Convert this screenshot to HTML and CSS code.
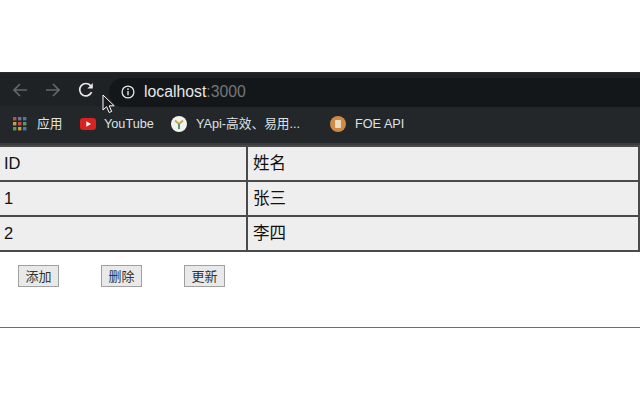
FILE: index.html
```html
<!DOCTYPE html>
<html lang="zh">
<head>
<meta charset="utf-8">
<title>localhost:3000</title>
<link rel="stylesheet" href="styles.css">
</head>
<body>
<div class="page">
  <header class="chrome">
    <div class="toolbar">
      <div class="navs">
        <svg class="nav" width="18" height="18" viewBox="0 0 18 18"><path d="M16 9H3M9 3L3 9l6 6" fill="none" stroke="#63676a" stroke-width="1.7"/></svg>
        <svg class="nav" width="18" height="18" viewBox="0 0 18 18"><path d="M2 9h13M9 3l6 6-6 6" fill="none" stroke="#63676a" stroke-width="1.7"/></svg>
        <svg class="nav" width="18" height="18" viewBox="0 0 18 18"><path d="M14.6 11.2A6.2 6.2 0 1 1 13.6 4.6L15 6" fill="none" stroke="#e4e6e7" stroke-width="1.7"/><path d="M15.8 2v5.4h-5.4z" fill="#e4e6e7"/></svg>
      </div>
      <div class="omnibox">
        <svg class="info" width="14" height="14" viewBox="0 0 14 14"><circle cx="7" cy="7" r="5.9" fill="none" stroke="#e4e6e7" stroke-width="1.3"/><path d="M7 6v4.2" stroke="#e4e6e7" stroke-width="1.4"/><circle cx="7" cy="4.1" r=".9" fill="#e4e6e7"/></svg>
        <span class="host">localhost</span><span class="port">:3000</span>
      </div>
    </div>
    <nav class="bookmarks">
      <span class="bm bm-apps">
        <svg width="14" height="14" viewBox="0 0 14 14">
          <g>
            <rect x="0" y="0" width="3.4" height="3.4" fill="#b5534a"/><rect x="5" y="0" width="3.4" height="3.4" fill="#7e6a9e"/><rect x="10" y="0" width="3.4" height="3.4" fill="#4a78b8"/>
            <rect x="0" y="5" width="3.4" height="3.4" fill="#c9a13c"/><rect x="5" y="5" width="3.4" height="3.4" fill="#b5534a"/><rect x="10" y="5" width="3.4" height="3.4" fill="#5a9a5e"/>
            <rect x="0" y="10" width="3.4" height="3.4" fill="#5a9a5e"/><rect x="5" y="10" width="3.4" height="3.4" fill="#c9a13c"/><rect x="10" y="10" width="3.4" height="3.4" fill="#4a78b8"/>
          </g>
        </svg>
        应用
      </span>
      <span class="bm bm-yt">
        <svg width="16" height="12" viewBox="0 0 16 12"><rect width="16" height="12" rx="3" fill="#d92323"/><path d="M6.3 3.3v5.4L11 6z" fill="#fff"/></svg>
        YouTube
      </span>
      <span class="bm bm-yapi">
        <svg width="16" height="16" viewBox="0 0 16 16"><circle cx="8" cy="8" r="8" fill="#f2f2ee"/><path d="M4 4.6L8 8l4-3.4" fill="none" stroke="#c9a93a" stroke-width="2"/><path d="M8 8v5" stroke="#4d9a7d" stroke-width="2"/></svg>
        YApi-高效、易用...
      </span>
      <span class="bm bm-foe">
        <svg width="16" height="16" viewBox="0 0 16 16"><circle cx="8" cy="8" r="8" fill="#cf8a45"/><rect x="5" y="4" width="6" height="8" rx="1" fill="#e9dcc6"/></svg>
        FOE API
      </span>
    </nav>
  </header>
  <div class="table-wrap">
    <table class="data">
      <tr><td class="col-id">ID</td><td>姓名</td></tr>
      <tr><td class="col-id">1</td><td>张三</td></tr>
      <tr><td class="col-id">2</td><td>李四</td></tr>
    </table>
  </div>
  <div class="actions">
    <button class="btn">添加</button>
    <button class="btn">删除</button>
    <button class="btn">更新</button>
  </div>
  <hr class="rule">
  <svg class="cursor" width="14" height="20" viewBox="0 0 14 20"><path d="M1 1v15l3.6-3.3 2.5 5.8 2.6-1.1-2.5-5.6h5z" fill="#1a1a1a" stroke="#fff" stroke-width="1"/></svg>
</div>
</body>
</html>
```
FILE: styles.css
```css
html, body {
  margin: 0;
  padding: 0;
  background: #fff;
}
body {
  font-family: "Liberation Sans", "Noto Sans CJK SC", sans-serif;
  overflow: hidden;
}
.page {
  position: relative;
  width: 640px;
  height: 400px;
  overflow: hidden;
  padding-top: 72px;
  box-sizing: border-box;
}
.chrome {
  height: 73px;
  background: #23272a;
  box-shadow: inset 0 -2px 0 #3a3c3e;
}
.toolbar {
  display: flex;
  height: 34px;
  background: #1f2224;
  border-top: 1px solid #2b2b2b;
  box-sizing: border-box;
}
.navs {
  display: flex;
  align-items: center;
  gap: 15px;
  padding: 1px 0 0 11px;
  width: 109px;
  box-sizing: border-box;
}
.omnibox {
  flex: 1;
  display: flex;
  align-items: center;
  margin-top: 5px;
  padding: 0 0 2px 12px;
  background: #141719;
  border-radius: 14px 0 0 14px;
  font-size: 15.8px;
  height: 29px;
  margin-bottom: -1px;
  box-sizing: border-box;
}
.info {
  margin-right: 9px;
}
.host {
  color: #e6e8e9;
}
.port {
  color: #73777a;
}
.bookmarks {
  display: flex;
  align-items: center;
  height: 38px;
  padding: 0 0 2px 13px;
  font-size: 12.7px;
  line-height: 16px;
  color: #dfe1e2;
  box-sizing: border-box;
}
.bm {
  display: flex;
  align-items: center;
  gap: 10px;
}
.bm-apps { width: 67px; }
.bm-yt { width: 91px; gap: 8px; }
.bm-yapi { width: 159px; gap: 9px; }
.bm-foe { gap: 9px; }
.table-wrap {
  overflow: hidden;
}
.data {
  width: 642px;
  margin-left: -2px;
  border-collapse: collapse;
  table-layout: fixed;
  font-size: 16.5px;
  line-height: 20px;
  color: #111;
}
.data td {
  height: 35px;
  padding: 0 0 1px 5px;
  border: 2px solid #4a4a4a;
  background: #eee;
  box-sizing: border-box;
}
.data td.col-id {
  width: 248px;
  padding-left: 4px;
}
.actions {
  display: flex;
  gap: 42px;
  padding: 13px 0 0 18px;
}
.btn {
  width: 41px;
  height: 22px;
  padding: 0 0 2px;
  border: 1px solid #a0a0a0;
  background: #e9e9e9;
  font: 13px "Liberation Sans", "Noto Sans CJK SC", sans-serif;
  color: #333;
}
.rule {
  margin: 40px 0 0;
  border: 0;
  border-top: 1px solid #6e6e6e;
}
.cursor {
  position: absolute;
  left: 102px;
  top: 94px;
}
```
